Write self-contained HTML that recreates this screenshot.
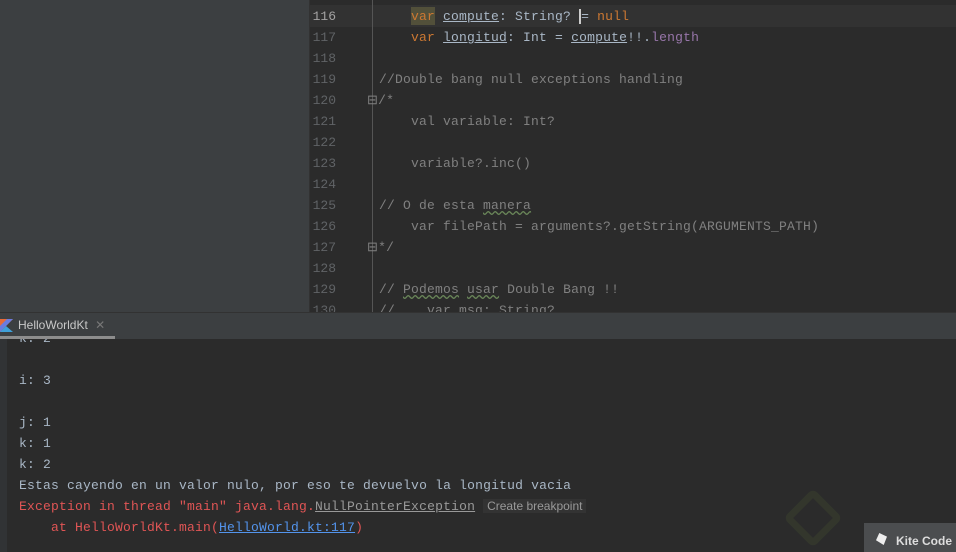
<!DOCTYPE html>
<html><head><style>
body{margin:0;width:956px;height:552px;overflow:hidden;background:#2b2b2b;position:relative;font-family:"Liberation Mono",monospace;font-size:13px;letter-spacing:0.2px}
.abs{position:absolute}
.ln{position:absolute;height:21px;line-height:21px;white-space:pre}
.num{color:#606366;width:30px;text-align:right;left:306px;letter-spacing:0}
.c{color:#a9b7c6}.k{color:#cc7832}.cm{color:#808080}.p{color:#9876aa}
.u{text-decoration:underline}
.w{text-decoration:underline wavy #6a8759}
.r{color:#e05555}
</style></head><body>
<div class="abs" style="left:0;top:0;width:309px;height:313px;background:#3c3f41"></div>
<div class="abs" style="left:309px;top:0;width:1px;height:313px;background:#323232"></div>
<div class="abs" style="left:310px;top:5px;width:646px;height:22px;background:#323232"></div>
<div class="abs" style="left:372px;top:0;width:1px;height:313px;background:#555"></div>
<div class="abs" style="left:411px;top:7px;width:24px;height:18px;background:#52503a"></div>

<div class="ln num" style="top:6px;color:#a4a3a3">116</div>
<div class="ln num" style="top:27px">117</div>
<div class="ln num" style="top:48px">118</div>
<div class="ln num" style="top:69px">119</div>
<div class="ln num" style="top:90px">120</div>
<div class="ln num" style="top:111px">121</div>
<div class="ln num" style="top:132px">122</div>
<div class="ln num" style="top:153px">123</div>
<div class="ln num" style="top:174px">124</div>
<div class="ln num" style="top:195px">125</div>
<div class="ln num" style="top:216px">126</div>
<div class="ln num" style="top:237px">127</div>
<div class="ln num" style="top:258px">128</div>
<div class="ln num" style="top:279px">129</div>
<div class="ln num" style="top:300px">130</div>

<div class="ln c" style="left:411px;top:6px"><span class="k">var</span> <span class="u">compute</span>: String? <span style="border-left:2px solid #ccc">=</span> <span class="k">null</span></div>
<div class="ln c" style="left:411px;top:27px"><span class="k">var</span> <span class="u">longitud</span>: Int = <span class="u">compute</span>!!.<span class="p">length</span></div>
<div class="ln cm" style="left:379px;top:69px">//Double bang null exceptions handling</div>
<div class="ln cm" style="left:367px;top:90px">⊟/*</div>
<div class="ln cm" style="left:411px;top:111px">val variable: Int?</div>
<div class="ln cm" style="left:411px;top:153px">variable?.inc()</div>
<div class="ln cm" style="left:379px;top:195px">// O de esta <span class="w">manera</span></div>
<div class="ln cm" style="left:411px;top:216px">var filePath = arguments?.getString(ARGUMENTS_PATH)</div>
<div class="ln cm" style="left:367px;top:237px">⊟*/</div>
<div class="ln cm" style="left:379px;top:279px">// <span class="w">Podemos</span> <span class="w">usar</span> Double Bang !!</div>
<div class="ln cm" style="left:379px;top:300px">//    var msg: String?</div>

<div class="abs" style="left:0;top:339px;width:7px;height:213px;background:#313335"></div>

<div class="ln c" style="left:19px;top:328px">k: 2</div>
<div class="ln c" style="left:19px;top:370px">i: 3</div>
<div class="ln c" style="left:19px;top:412px">j: 1</div>
<div class="ln c" style="left:19px;top:433px">k: 1</div>
<div class="ln c" style="left:19px;top:454px">k: 2</div>
<div class="ln c" style="left:19px;top:475px">Estas cayendo en un valor nulo, por eso te devuelvo la longitud vacia</div>
<div class="ln r" style="left:19px;top:496px">Exception in thread "main" java.lang.<span class="u" style="color:#999">NullPointerException</span> <span style="font-family:'Liberation Sans',sans-serif;font-size:12px;color:#999;background:#333;padding:0 4px;letter-spacing:0">Create breakpoint</span></div>
<div class="ln r" style="left:51px;top:517px">at HelloWorldKt.main(<span class="u" style="color:#5394ec">HelloWorld.kt:117</span>)</div>

<div class="abs" style="left:0;top:312px;width:956px;height:26px;background:#3c3f41;border-top:1px solid #323232"></div>
<svg class="abs" style="left:0;top:319px" width="13" height="14"><polygon points="0,0 13,0 0,13" fill="#e66b3a"/><polygon points="0,7 7,0 13,0 0,13" fill="#6a7ce0"/><polygon points="0,13 6,7 13,13" fill="#3fa0d8"/></svg>
<div class="abs" style="left:18px;top:318px;font-family:'Liberation Sans',sans-serif;font-size:12px;color:#c8c8c8;letter-spacing:0">HelloWorldKt <span style="color:#777;margin-left:4px">✕</span></div>
<div class="abs" style="left:0;top:336px;width:115px;height:3px;background:#8d8d8d"></div>

<div class="abs" style="left:792px;top:497px;width:28px;height:28px;border:7px solid #33362c;border-radius:6px;transform:rotate(45deg)"></div>
<div class="abs" style="left:864px;top:523px;width:92px;height:29px;background:#4b4d4f"></div>
<div class="abs" style="left:876px;top:533px;width:11px;height:12px;background:#eee;clip-path:polygon(30% 0,100% 30%,70% 100%,0 60%)"></div>
<div class="abs" style="left:896px;top:534px;font-family:'Liberation Sans',sans-serif;font-size:12px;font-weight:bold;color:#ddd;letter-spacing:0;white-space:nowrap">Kite Code F</div>
</body></html>
